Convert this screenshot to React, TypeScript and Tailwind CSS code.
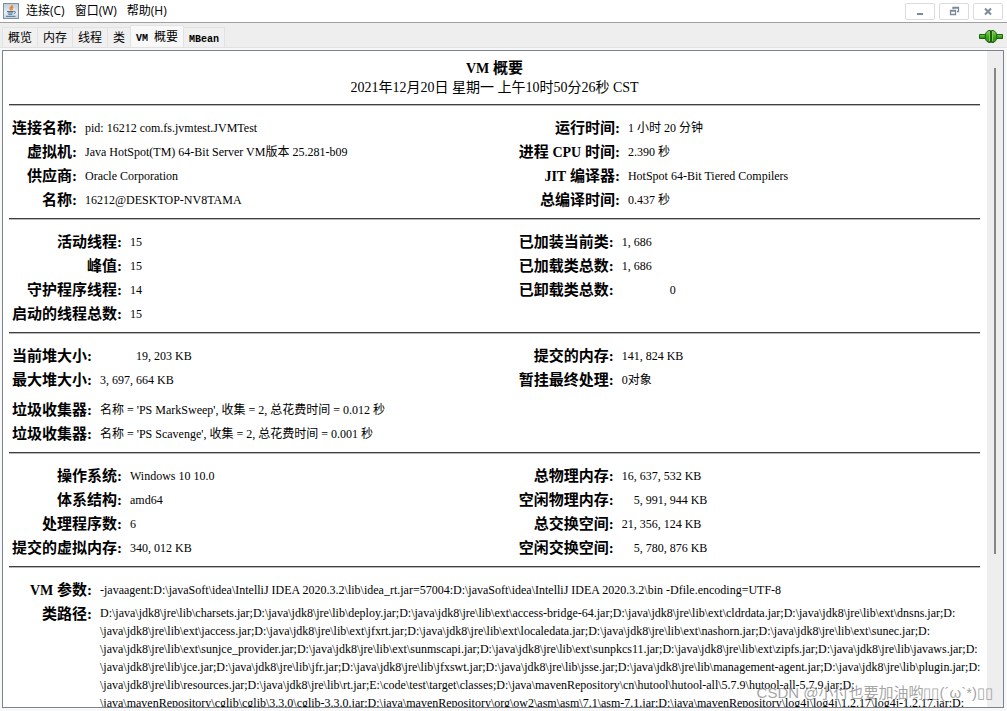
import React from "react";

type Row = { label: string; value: React.ReactNode; pad?: string };

const LATIN = /([A-Za-z]+)/;

// Bold label: CJK glyphs are set slightly larger than the Latin ones.
function Label({ text }: { text: string }) {
  return (
    <>
      {text.split(LATIN).map((part, i) =>
        i % 2 === 1 ? (
          <span key={i} className="text-[14px] leading-none">
            {part}
          </span>
        ) : (
          part
        ),
      )}
    </>
  );
}

// Figures are fixed pitch, so a comma takes a whole digit cell.
function Figure({ value, unit }: { value: string; unit?: string }) {
  return (
    <span>
      {value.split("").map((c, i) =>
        c === "," ? (
          <span key={i} className="inline-block w-1.5">
            ,
          </span>
        ) : (
          <React.Fragment key={i}>{c}</React.Fragment>
        ),
      )}
      {unit ? ` ${unit}` : null}
    </span>
  );
}

function Facts({ rows }: { rows: Row[] }) {
  return (
    <table className="border-collapse self-start justify-self-start">
      <tbody>
        {rows.map((row, i) => (
          <tr key={i} className="h-6">
            <th scope="row" className="p-0 pr-2 text-right align-top text-[15px] leading-6 font-bold whitespace-nowrap">
              <Label text={row.label} />:
            </th>
            <td className={`p-0 align-top text-[12px] leading-6 whitespace-nowrap ${row.pad ?? ""}`}>{row.value}</td>
          </tr>
        ))}
      </tbody>
    </table>
  );
}

function Rule() {
  return <hr className="h-[2px] border-0 border-t border-[#404040] bg-[#b8b8b8]" />;
}

function Section({ left, right, children }: { left: Row[]; right: Row[]; children?: React.ReactNode }) {
  return (
    <section>
      <Rule />
      <div className="px-[3px] pt-[10px] pb-[6px]">
        <div className="grid grid-cols-[52.5%_1fr]">
          <Facts rows={left} />
          <Facts rows={right} />
        </div>
        {children}
      </div>
    </section>
  );
}

const CLASS_PATH = [
  "D:\\java\\jdk8\\jre\\lib\\charsets.jar;D:\\java\\jdk8\\jre\\lib\\deploy.jar;D:\\java\\jdk8\\jre\\lib\\ext\\access-bridge-64.jar;D:\\java\\jdk8\\jre\\lib\\ext\\cldrdata.jar;D:\\java\\jdk8\\jre\\lib\\ext\\dnsns.jar;D:",
  "\\java\\jdk8\\jre\\lib\\ext\\jaccess.jar;D:\\java\\jdk8\\jre\\lib\\ext\\jfxrt.jar;D:\\java\\jdk8\\jre\\lib\\ext\\localedata.jar;D:\\java\\jdk8\\jre\\lib\\ext\\nashorn.jar;D:\\java\\jdk8\\jre\\lib\\ext\\sunec.jar;D:",
  "\\java\\jdk8\\jre\\lib\\ext\\sunjce_provider.jar;D:\\java\\jdk8\\jre\\lib\\ext\\sunmscapi.jar;D:\\java\\jdk8\\jre\\lib\\ext\\sunpkcs11.jar;D:\\java\\jdk8\\jre\\lib\\ext\\zipfs.jar;D:\\java\\jdk8\\jre\\lib\\javaws.jar;D:",
  "\\java\\jdk8\\jre\\lib\\jce.jar;D:\\java\\jdk8\\jre\\lib\\jfr.jar;D:\\java\\jdk8\\jre\\lib\\jfxswt.jar;D:\\java\\jdk8\\jre\\lib\\jsse.jar;D:\\java\\jdk8\\jre\\lib\\management-agent.jar;D:\\java\\jdk8\\jre\\lib\\plugin.jar;D:",
  "\\java\\jdk8\\jre\\lib\\resources.jar;D:\\java\\jdk8\\jre\\lib\\rt.jar;E:\\code\\test\\target\\classes;D:\\java\\mavenRepository\\cn\\hutool\\hutool-all\\5.7.9\\hutool-all-5.7.9.jar;D:",
  "\\java\\mavenRepository\\cglib\\cglib\\3.3.0\\cglib-3.3.0.jar;D:\\java\\mavenRepository\\org\\ow2\\asm\\asm\\7.1\\asm-7.1.jar;D:\\java\\mavenRepository\\log4j\\log4j\\1.2.17\\log4j-1.2.17.jar;D:",
];

function JavaIcon() {
  return (
    <svg width="16" height="16" viewBox="0 0 16 16" aria-hidden="true">
      <defs>
        <linearGradient id="jbg" x1="0" y1="0" x2="0" y2="1">
          <stop offset="0" stopColor="#b9cbd9" />
          <stop offset="0.6" stopColor="#e9eff4" />
          <stop offset="1" stopColor="#c3d1dc" />
        </linearGradient>
      </defs>
      <rect x="0.5" y="0.5" width="15" height="15" fill="url(#jbg)" stroke="#7f909e" />
      <path d="M9 2c.8 1.5-2.6 2.4-2 3.8.3.7.9.9.7 1.7M10.2 3.8c-1.5.7-1.9 1.3-1.2 2.2.4.5.2.9-.2 1.3" fill="none" stroke="#ef7d1a" strokeWidth="1.3" />
      <path d="M4 8.5h6.800M4.6 9.9h5.400M5.4 11.3h3.800M3 13.3h9.500M11 8.6c1.9-.5 2.1 1.5-.3 2.100" fill="none" stroke="#3a6488" strokeWidth="0.9" />
    </svg>
  );
}

function PlugIcon() {
  return (
    <svg width="24" height="16" viewBox="0 0 24 16" role="img" aria-label="已连接">
      <defs>
        <linearGradient id="plug" x1="0" y1="0" x2="0" y2="1">
          <stop offset="0" stopColor="#8fd86a" />
          <stop offset="0.45" stopColor="#3fae1c" />
          <stop offset="1" stopColor="#2a8a0e" />
        </linearGradient>
      </defs>
      <path d="M0.5 5.5h6v4h-6zM17.5 5.5h6v4h-6z" fill="url(#plug)" stroke="#1f5c14" />
      <path d="M11.5 1.5H10C7.5 2 6.2 4.5 6.2 7.5S7.5 13 10 13.5h1.5z" fill="url(#plug)" stroke="#1f5c14" />
      <path d="M12.5 1.5H14c2.5.5 3.8 3 3.8 6s-1.3 5.5-3.8 6h-1.5z" fill="url(#plug)" stroke="#1f5c14" />
      <path d="M10.5 3v9M13.5 3v9" stroke="#7ccc52" />
    </svg>
  );
}

const WINDOW_BUTTONS = [
  { name: "最小化", icon: <path d="M5 10h6v2H5z" fill="#7b8a9a" /> },
  {
    name: "还原",
    icon: <path d="M7 6V4.5h5.5v4H11M4.5 7.5h5v4h-5zM7 5h6M4 8h6" fill="none" stroke="#7b8a9a" strokeWidth="1.3" />,
  },
  { name: "关闭", icon: <path d="M5 5.5l6 6M11 5.5l-6 6" fill="none" stroke="#7b8a9a" strokeWidth="2" /> },
];

const TABS = ["概览", "内存", "线程", "类", "VM 概要", "MBean"];

export default function App() {
  return (
    <div className="relative flex h-screen flex-col overflow-hidden bg-[#eeeeee] font-['Liberation_Serif','Noto_Sans_CJK_SC',serif] text-black">
      <header className="flex h-[23px] shrink-0 items-center border-b border-[#a0a0a0] bg-white pr-1 pl-[3px]">
        <JavaIcon />
        <nav className="ml-[7px] flex gap-[10px] font-['Open_Sans','Noto_Sans_CJK_SC',sans-serif] text-[12px] leading-5">
          <button type="button">连接(C)</button>
          <button type="button">窗口(W)</button>
          <button type="button">帮助(H)</button>
        </nav>
        <div className="ml-auto flex gap-1">
          {WINDOW_BUTTONS.map((b) => (
            <button
              key={b.name}
              type="button"
              aria-label={b.name}
              className="flex h-[17px] w-[30px] items-center justify-center rounded-xs border border-[#dcdcdc] bg-white"
            >
              <svg width="16" height="16" viewBox="0 0 16 16" aria-hidden="true">
                {b.icon}
              </svg>
            </button>
          ))}
        </div>
      </header>

      <div className="flex h-6 shrink-0 items-end pr-1 pl-[3px]">
        <div role="tablist" className="flex items-end">
          {TABS.map((t) => {
            const selected = t === "VM 概要";
            return (
              <button
                key={t}
                type="button"
                role="tab"
                aria-selected={selected}
                className={
                  selected
                    ? "-ml-px h-[22px] border border-b-0 border-[#e2e2e2] bg-[#f8f8f8] px-[5px] text-[12px] leading-5"
                    : "-ml-px h-5 border border-b-0 border-[#e2e2e2] bg-[#f0f0f0] px-[5px] text-[12px] leading-5"
                }
              >
                {t.split(/([A-Za-z]+ ?)/).map((part, i) =>
                  i % 2 === 1 ? (
                    <span key={i} className="font-['Liberation_Mono',monospace] text-[10px] leading-none font-bold whitespace-pre">
                      {part}
                    </span>
                  ) : (
                    part
                  ),
                )}
              </button>
            );
          })}
        </div>
        <div className="mb-[2px] ml-auto">
          <PlugIcon />
        </div>
      </div>

      <div className="flex min-h-0 flex-1 border-t border-[#e2e2e2] bg-[#f8f8f8] pt-[2px] pr-[3px] pb-[3px] pl-[2px]">
        <main className="flex min-w-0 flex-1 border border-[#7a8490] bg-white">
          <div className="min-w-0 flex-1 overflow-hidden pt-[7px] pr-[7px] pl-[6px]">
            <div className="pb-[6px] text-center">
              <h1 className="text-[15px] leading-5 font-bold">
                <Label text="VM 概要" />
              </h1>
              <p className="text-[14px] leading-5">2021年12月20日 星期一 上午10时50分26秒 CST</p>
            </div>

            <Section
              left={[
                { label: "连接名称", value: "pid: 16212 com.fs.jvmtest.JVMTest" },
                { label: "虚拟机", value: "Java HotSpot(TM) 64-Bit Server VM版本 25.281-b09" },
                { label: "供应商", value: "Oracle Corporation" },
                { label: "名称", value: "16212@DESKTOP-NV8TAMA" },
              ]}
              right={[
                { label: "运行时间", value: "1 小时 20 分钟" },
                { label: "进程 CPU 时间", value: "2.390 秒" },
                { label: "JIT 编译器", value: "HotSpot 64-Bit Tiered Compilers" },
                { label: "总编译时间", value: "0.437 秒" },
              ]}
            />
            <Section
              left={[
                { label: "活动线程", value: <Figure value="15" /> },
                { label: "峰值", value: <Figure value="15" /> },
                { label: "守护程序线程", value: <Figure value="14" /> },
                { label: "启动的线程总数", value: <Figure value="15" /> },
              ]}
              right={[
                { label: "已加装当前类", value: <Figure value="1,686" /> },
                { label: "已加载类总数", value: <Figure value="1,686" /> },
                { label: "已卸载类总数", value: <Figure value="0" />, pad: "pl-12" },
              ]}
            />
            <Section
              left={[
                { label: "当前堆大小", value: <Figure value="19,203" unit="KB" />, pad: "pl-9" },
                { label: "最大堆大小", value: <Figure value="3,697,664" unit="KB" /> },
              ]}
              right={[
                { label: "提交的内存", value: <Figure value="141,824" unit="KB" /> },
                { label: "暂挂最终处理", value: "0对象" },
              ]}
            >
              <div className="mt-[6px]">
                <Facts
                  rows={[
                    { label: "垃圾收集器", value: "名称 = 'PS MarkSweep', 收集 = 2, 总花费时间 = 0.012 秒" },
                    { label: "垃圾收集器", value: "名称 = 'PS Scavenge', 收集 = 2, 总花费时间 = 0.001 秒" },
                  ]}
                />
              </div>
            </Section>
            <Section
              left={[
                { label: "操作系统", value: "Windows 10 10.0" },
                { label: "体系结构", value: "amd64" },
                { label: "处理程序数", value: "6" },
                { label: "提交的虚拟内存", value: <Figure value="340,012" unit="KB" /> },
              ]}
              right={[
                { label: "总物理内存", value: <Figure value="16,637,532" unit="KB" /> },
                { label: "空闲物理内存", value: <Figure value="5,991,944" unit="KB" />, pad: "pl-3" },
                { label: "总交换空间", value: <Figure value="21,356,124" unit="KB" /> },
                { label: "空闲交换空间", value: <Figure value="5,780,876" unit="KB" />, pad: "pl-3" },
              ]}
            />
            <section>
              <Rule />
              <table className="mt-[10px] ml-[3px] border-collapse">
                <tbody>
                  <tr>
                    <th scope="row" className="p-0 pr-2 text-right align-top text-[15px] leading-6 font-bold whitespace-nowrap">
                      <div className="w-20">
                        <Label text="VM 参数" />:
                      </div>
                    </th>
                    <td className="p-0 align-top text-[12px] leading-6 whitespace-nowrap">
                      -javaagent:D:\javaSoft\idea\IntelliJ IDEA 2020.3.2\lib\idea_rt.jar=57004:D:\javaSoft\idea\IntelliJ IDEA 2020.3.2\bin
                      -Dfile.encoding=UTF-8
                    </td>
                  </tr>
                  <tr>
                    <th scope="row" className="p-0 pr-2 text-right align-top text-[15px] leading-6 font-bold whitespace-nowrap">
                      类路径:
                    </th>
                    <td className="p-0 pt-[2px] align-top text-[12px] leading-[18px] whitespace-nowrap">
                      {CLASS_PATH.map((line) => (
                        <div key={line}>{line}</div>
                      ))}
                    </td>
                  </tr>
                </tbody>
              </table>
            </section>
          </div>
          <div className="flex w-4 shrink-0 flex-col items-center bg-[#eeeeee] pt-[17px]">
            <div className="h-[76%] w-[2px] bg-[#868686]" />
          </div>
        </main>
      </div>

      <div className="pointer-events-none absolute right-[14px] bottom-[8px] font-['Liberation_Sans','Noto_Sans_CJK_SC',sans-serif] text-[15px] leading-5 whitespace-nowrap text-[#8c8c8c]/80">
        CSDN @小付也要加油哟▯▯(´ω`*)▯▯
      </div>
    </div>
  );
}
